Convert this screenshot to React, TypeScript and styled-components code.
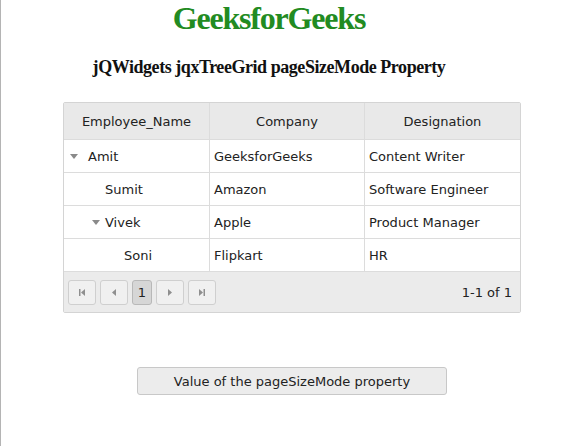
import React from "react";
import styled, { createGlobalStyle } from "styled-components";

const Global = createGlobalStyle`
  html, body { margin: 0; padding: 0; background: #fff; }
  body { min-height: 446px; border-left: 1px solid #b4b4b4; box-sizing: border-box; }
`;

const Page = styled.div`
  width: 536px;
`;

const Title = styled.h1`
  margin: 0;
  text-align: center;
  font-family: "Liberation Serif", serif;
  font-weight: bold;
  font-size: 32px;
  letter-spacing: -1.2px;
  line-height: 36px;
  color: #228b22;
`;

const Subtitle = styled.h3`
  margin: 20px 0 0;
  text-align: center;
  font-family: "Liberation Serif", serif;
  font-weight: bold;
  font-size: 18px;
  letter-spacing: -0.45px;
  line-height: 22px;
  color: #111;
`;

const Content = styled.div`
  margin-left: 62px;
  width: 458px;
  font-family: "DejaVu Sans", Verdana, sans-serif;
  font-size: 13px;
  color: #222;
`;

const Grid = styled.div`
  margin-top: 24px;
  border: 1px solid #d4d4d4;
  border-radius: 2px;
  box-sizing: border-box;
`;

const Row = styled.div<{ $header?: boolean; $h: number }>`
  display: grid;
  grid-template-columns: 146px 155px 1fr;
  height: ${(p) => p.$h}px;
  border-bottom: 1px solid #dcdcdc;
  background: ${(p) => (p.$header ? "#e9e9e9" : "#fff")};
  box-sizing: border-box;
`;

const Cell = styled.div<{ $center?: boolean; $last?: boolean }>`
  display: flex;
  align-items: center;
  justify-content: ${(p) => (p.$center ? "center" : "flex-start")};
  padding-left: ${(p) => (p.$center ? 0 : 4)}px;
  border-right: ${(p) => (p.$last ? "none" : "1px solid #dcdcdc")};
  white-space: nowrap;
`;

const NameCell = styled.div<{ $indent: number }>`
  display: flex;
  align-items: center;
  padding-left: ${(p) => p.$indent}px;
  border-right: 1px solid #dcdcdc;
  white-space: nowrap;
`;

const Arrow = styled.span<{ $gap: number }>`
  width: 0;
  height: 0;
  border-left: 4px solid transparent;
  border-right: 4px solid transparent;
  border-top: 5px solid #8a8a8a;
  margin-right: ${(p) => p.$gap}px;
`;

const Pager = styled.div`
  height: 40px;
  background: #ebebeb;
  display: flex;
  align-items: center;
  padding: 0 8px 0 4px;
  gap: 4px;
`;

const PageBtn = styled.div<{ $w: number; $active?: boolean }>`
  width: ${(p) => p.$w}px;
  height: 25px;
  box-sizing: border-box;
  border: 1px solid ${(p) => (p.$active ? "#b8b8b8" : "#cfcfcf")};
  border-radius: 3px;
  background: ${(p) => (p.$active ? "#d6d6d6" : "#f0f0f0")};
  display: flex;
  align-items: center;
  justify-content: center;
  color: #222;
  font-size: 13px;
`;

const Info = styled.div`
  margin-left: auto;
`;

const ActionButton = styled.div`
  margin: 54px 0 0 74px;
  width: 310px;
  height: 28px;
  box-sizing: border-box;
  border: 1px solid #c8c8c8;
  border-radius: 3px;
  background: #ececec;
  display: flex;
  align-items: center;
  justify-content: center;
  color: #222;
`;

const Icon = ({ kind }: { kind: "first" | "prev" | "next" | "last" }) => {
  const fill = "#8f8f8f";
  return (
    <svg width="8" height="9" viewBox="0 0 8 9">
      {kind === "first" && (
        <>
          <rect x="1" y="1" width="1.5" height="7" fill={fill} />
          <polygon points="7,1 7,8 3,4.5" fill={fill} />
        </>
      )}
      {kind === "prev" && <polygon points="6,1 6,8 2,4.5" fill={fill} />}
      {kind === "next" && <polygon points="2,1 2,8 6,4.5" fill={fill} />}
      {kind === "last" && (
        <>
          <polygon points="1,1 1,8 5,4.5" fill={fill} />
          <rect x="5.5" y="1" width="1.5" height="7" fill={fill} />
        </>
      )}
    </svg>
  );
};

const rows = [
  { name: "Amit", indent: 6, arrow: true, gap: 10, company: "GeeksforGeeks", role: "Content Writer" },
  { name: "Sumit", indent: 41, arrow: false, gap: 0, company: "Amazon", role: "Software Engineer" },
  { name: "Vivek", indent: 28, arrow: true, gap: 5, company: "Apple", role: "Product Manager" },
  { name: "Soni", indent: 60, arrow: false, gap: 0, company: "Flipkart", role: "HR" },
];

export default function App() {
  return (
    <>
      <Global />
      <Page>
        <Title>GeeksforGeeks</Title>
        <Subtitle>jQWidgets jqxTreeGrid pageSizeMode Property</Subtitle>
        <Content>
          <Grid>
            <Row $header $h={37}>
              <Cell $center>Employee_Name</Cell>
              <Cell $center>Company</Cell>
              <Cell $center $last>Designation</Cell>
            </Row>
            {rows.map((r) => (
              <Row key={r.name} $h={33}>
                <NameCell $indent={r.indent}>
                  {r.arrow && <Arrow $gap={r.gap} />}
                  {r.name}
                </NameCell>
                <Cell>{r.company}</Cell>
                <Cell $last>{r.role}</Cell>
              </Row>
            ))}
            <Pager>
              <PageBtn $w={28}><Icon kind="first" /></PageBtn>
              <PageBtn $w={28}><Icon kind="prev" /></PageBtn>
              <PageBtn $w={20} $active>1</PageBtn>
              <PageBtn $w={28}><Icon kind="next" /></PageBtn>
              <PageBtn $w={28}><Icon kind="last" /></PageBtn>
              <Info>1-1 of 1</Info>
            </Pager>
          </Grid>
          <ActionButton>Value of the pageSizeMode property</ActionButton>
        </Content>
      </Page>
    </>
  );
}
